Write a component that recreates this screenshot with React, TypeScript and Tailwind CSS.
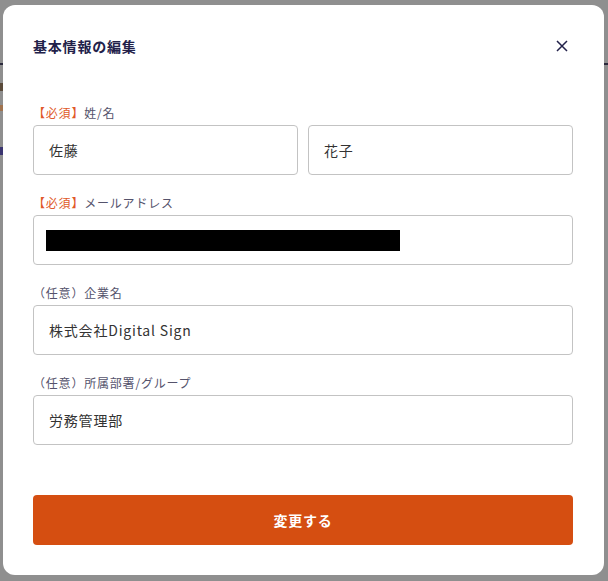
import { ReactNode } from 'react';

const font = { fontFamily: '"Noto Sans CJK JP", "Noto Sans", sans-serif' };

const Label = ({ tag, children }: { tag: 'required' | 'optional'; children: ReactNode }) => (
  <div className="mb-[3px] text-[12px] leading-[18px] text-[#55536c]">
    {tag === 'required' ? <span className="text-[#e0592a]">【必須】</span> : <span>（任意）</span>}
    {children}
  </div>
);

const Field = ({ value, children }: { value?: string; children?: ReactNode }) => (
  <div className="flex h-[50px] flex-1 items-center rounded-[4px] border border-[#c3c3c3] bg-white px-[15px] text-[14px] text-[#333]">
    {children ?? value}
  </div>
);

export default function App() {
  return (
    <div className="relative h-[581px] w-[608px] overflow-hidden bg-[#8f8f8f] tracking-[0.05em]" style={font}>
      {/* ページ側の名残（モーダルの後ろ） */}
      <div className="h-[63px]" />
      <div className="h-[2px] bg-[#2b2a3d]" />
      <div className="mt-[18px] h-[8px] w-[3px] bg-[#5a4a3a]" />
      <div className="mt-[14px] h-[6px] w-[3px] bg-[#a0734f]" />
      <div className="mt-[36px] h-[8px] w-[3px] bg-[#3a3570]" />

      <div className="absolute left-[3px] top-[5px] flex h-[570px] w-[601px] flex-col rounded-[12px] bg-white pl-[30px] pr-[31px] pt-[31px]">
        <div className="flex items-center justify-between">
          <h2 className="text-[14px] font-bold leading-[20px] text-[#22214a]">基本情報の編集</h2>
          <button className="mr-[1px] flex h-[20px] w-[20px] items-center justify-center text-[#22214a]">
            <svg width="12" height="12" viewBox="0 0 12 12" fill="none" stroke="currentColor" strokeWidth="1.5">
              <path d="M1 1L11 11M11 1L1 11" />
            </svg>
          </button>
        </div>

        <div className="mt-[48px]">
          <Label tag="required">姓/名</Label>
          <div className="flex gap-[10px]">
            <Field value="佐藤" />
            <Field value="花子" />
          </div>
        </div>

        <div className="mt-[19px]">
          <Label tag="required">メールアドレス</Label>
          <Field>
            <div className="-ml-[3px] h-[21px] w-[354px] bg-black" />
          </Field>
        </div>

        <div className="mt-[19px]">
          <Label tag="optional">企業名</Label>
          <Field value="株式会社Digital Sign" />
        </div>

        <div className="mt-[19px]">
          <Label tag="optional">所属部署/グループ</Label>
          <Field value="労務管理部" />
        </div>

        <button className="mt-[50px] h-[50px] rounded-[4px] bg-[#d54e11] text-[14px] font-bold text-white">
          変更する
        </button>
      </div>
    </div>
  );
}
